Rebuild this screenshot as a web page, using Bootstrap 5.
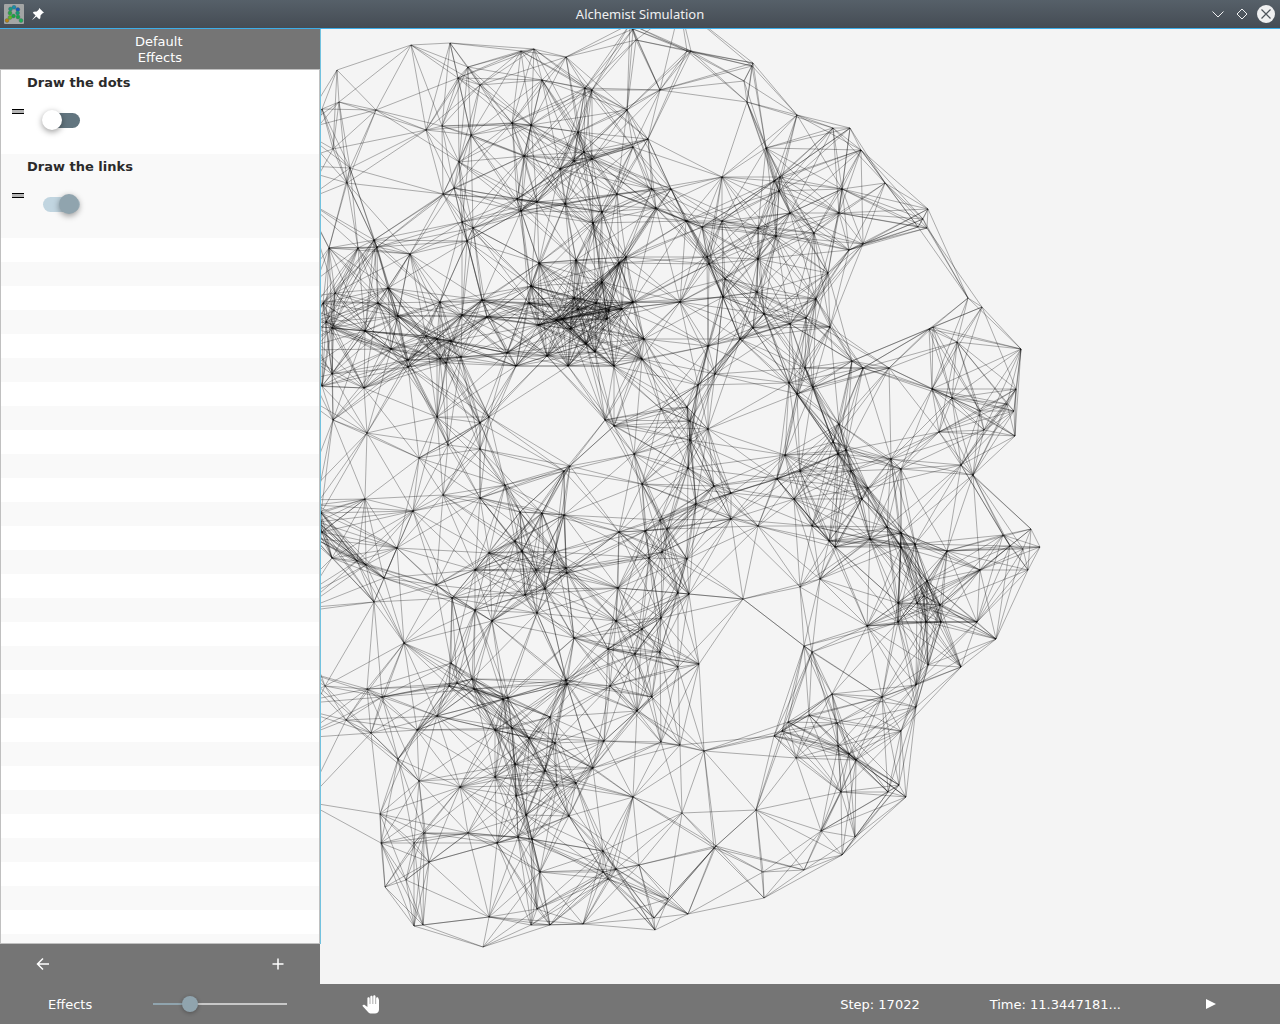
<!DOCTYPE html>
<html lang="en">
<head>
<meta charset="utf-8">
<meta name="viewport" content="width=device-width, initial-scale=1">
<title>Alchemist Simulation</title>
<link href="https://cdn.jsdelivr.net/npm/bootstrap@5.3.0/dist/css/bootstrap.min.css" rel="stylesheet">
<style>
  body { font: 13px/16px "DejaVu Sans", sans-serif; background: #f4f4f4; color: #212121; }
  .titlebar { height: 29px; background: linear-gradient(#566069, #454c54); border-bottom: 1px solid #3daee9; color: #eff0f1; font: 13px/18px "Noto Sans", sans-serif; }
  .titlebar .side { flex: 1 1 0; }
  .plain { border: 0; background: none; padding: 0; color: #fff; display: flex; align-items: center; justify-content: center; }
  .win { width: 20px; height: 20px; }
  .bar { background: #757575; color: #fff; height: 40px; }
  .bar label, .bar span, .drawer-title { padding-top: 2px; }
  .drawer { width: 320px; z-index: 1; }
  .drawer-top { box-shadow: 1px 0 0 #72c2df; }
  .drawer-title { width: 50px; padding-right: 3px; }
  .effects { border: 1px solid #c0c0c0; background: #fff; }
  .effect { height: 84px; padding: 5px 11px; gap: 3px; }
  .effect:nth-child(even) { background: #f9f9f9; }
  .effect label { font-weight: 700; color: #2b2b2b; }
  .stripes { background: repeating-linear-gradient(#fff 0 24px, #f9f9f9 24px 48px); }
  .toggle { appearance: none; display: block; width: 38px; height: 20px; margin: 19px 0 0 15px; position: relative; }
  .toggle::before { content: ""; position: absolute; inset: 3px 0 2px 1px; border-radius: 8px; background: #62757f; }
  .toggle::after { content: ""; position: absolute; left: 0; top: 0; width: 20px; height: 20px; border-radius: 50%; background: #fff; box-shadow: 0 2px 6px rgba(0,0,0,.4); }
  .toggle:checked::before { background: #c1d5e0; }
  .toggle:checked::after { left: 17px; background: #90a4ae; }
  .zoomer { appearance: none; width: 134px; height: 16px; margin: 0 0 0 61px; background: linear-gradient(90deg, #90a4ae 27%, #c8c8c8 27%) center / 100% 2px no-repeat; }
  .zoomer::-webkit-slider-thumb { appearance: none; width: 16px; height: 16px; border-radius: 50%; background: #90a4ae; box-shadow: 0 1px 4px rgba(0,0,0,.3); }
  .zoomer::-moz-range-thumb { width: 16px; height: 16px; border: 0; border-radius: 50%; background: #90a4ae; }
  .pan { margin-left: 75px; }
  .time { margin-left: 70px; }
  .play { margin: 0 16px 0 85px; }
  .links line { stroke: #000; stroke-opacity: .3; stroke-width: 1; }
</style>
<script src="https://cdn.jsdelivr.net/npm/bootstrap@5.3.0/dist/js/bootstrap.bundle.min.js"></script>
</head>
<body class="vh-100 d-flex flex-column overflow-hidden">
<header class="titlebar d-flex align-items-center flex-shrink-0 px-1">
  <div class="side d-flex align-items-center gap-2">
    <svg width="20" height="20" viewBox="0 0 20 20" aria-hidden="true">
      <rect width="20" height="20" rx="1" fill="#a3a5a5"/>
      <g stroke="#47665f" stroke-width=".4">
        <circle cx="10" cy="3.300" r="2" fill="#168cae"/><circle cx="6.500" cy="5" r="2" fill="#1a9c80"/><circle cx="13.800" cy="5.500" r="2" fill="#1758b8"/>
        <circle cx="6" cy="9" r="2" fill="#27a941"/><circle cx="13.600" cy="9" r="2" fill="#139c71"/><circle cx="9.500" cy="12" r="2" fill="#16a83f"/>
        <circle cx="6" cy="13.500" r="2" fill="#64b91c"/><circle cx="14" cy="13" r="2" fill="#16a446"/><circle cx="3" cy="16.500" r="2" fill="#b98212"/><circle cx="17" cy="16.500" r="2" fill="#1ead58"/>
      </g>
    </svg>
    <button class="plain" aria-label="Keep above"><svg width="12" height="12" viewBox="0 0 12 12" fill="#fff"><path d="M7.200 0 12 4.800 10.600 5.200 8.600 7.200 8.300 10.200 7.200 11.200 4.400 8.400 .6 11.700.3 11.400 3.600 7.600.8 4.800 1.800 3.700 4.800 3.400 6.800 1.400Z"/></svg></button>
  </div>
  <div>Alchemist Simulation</div>
  <div class="side d-flex justify-content-end gap-1">
    <button class="plain win" aria-label="Minimize"><svg width="12" height="12" fill="none" stroke="#eff0f1"><path d="M.5 3.500 6 9l5.500-5.500"/></svg></button>
    <button class="plain win" aria-label="Maximize"><svg width="12" height="12" fill="none" stroke="#eff0f1"><path d="M6 1 11 6 6 11 1 6Z"/></svg></button>
    <button class="plain win" aria-label="Close"><svg width="18" height="18" fill="none"><circle cx="9" cy="9" r="9" fill="#eff0f1"/><path d="m4.500 4.500 9 9m0-9-9 9" stroke="#4d545b" stroke-width="1.200"/></svg></button>
  </div>
</header>
<main class="d-flex flex-grow-1 overflow-hidden">
  <aside class="drawer d-flex flex-column flex-shrink-0 position-relative">
    <div class="drawer-top d-flex flex-column flex-grow-1">
      <div class="bar d-flex justify-content-center align-items-center"><div class="drawer-title text-end">Default Effects</div></div>
      <div class="effects d-flex flex-column flex-grow-1">
        <div class="effect d-flex">
          <svg class="my-auto flex-shrink-0" width="12" height="6" aria-hidden="true"><path d="M0 1h12v4H0z" fill="#b5b5b5"/><path d="M0 .5h12M0 4.500h12" stroke="#000"/></svg>
          <div>
            <label class="d-block" for="dots">Draw the dots</label>
            <input class="toggle" type="checkbox" role="switch" id="dots">
          </div>
        </div>
        <div class="effect d-flex">
          <svg class="my-auto flex-shrink-0" width="12" height="6" aria-hidden="true"><path d="M0 1h12v4H0z" fill="#b5b5b5"/><path d="M0 .5h12M0 4.500h12" stroke="#000"/></svg>
          <div>
            <label class="d-block" for="links">Draw the links</label>
            <input class="toggle" type="checkbox" role="switch" id="links" checked>
          </div>
        </div>
        <div class="stripes flex-grow-1"></div>
      </div>
    </div>
    <div class="bar d-flex justify-content-between align-items-center px-4">
      <button class="plain ms-2 p-1" aria-label="Back"><svg width="14" height="14" fill="none" stroke="#fff" stroke-width="1.500"><path d="M13 7H2M7 1.500 1.500 7 7 12.500"/></svg></button>
      <button class="plain me-2 p-1" aria-label="Add effect"><svg width="12" height="12" fill="none" stroke="#fff" stroke-width="1.500"><path d="M6 .5v11M.5 6h11"/></svg></button>
    </div>
  </aside>
  <section class="flex-grow-1 overflow-hidden">
    <svg class="links d-block w-100 h-100" id="graph" viewBox="320 29 960 955" role="img" aria-label="Simulation links"></svg>
  </section>
</main>
<footer class="bar d-flex align-items-center flex-shrink-0 px-5">
  <label for="zoom">Effects</label>
  <input class="zoomer" id="zoom" type="range" value="24">
  <button class="plain pan" aria-label="Pan"><svg width="18" height="19" viewBox="0 0 18 19" fill="#fff"><path d="M17 5v9.500c0 2.500-1.800 4-4 4H9.500c-1.500 0-2.500-.5-3.500-1.600L.3 10.700 1.200 9.900c.5-.3 1-.3 1.500 0l2.700 2V3.300c0-1.500 2.300-1.500 2.300 0V9h.6V1.800c0-1.500 2.300-1.500 2.300 0V9h.6V1.300c0-1.500 2.300-1.500 2.300 0V9h.6V3.300c0-1.500 2.300-1.500 2.300 0Z"/></svg></button>
  <span class="step ms-auto">Step: 17022</span>
  <span class="time">Time: 11.3447181...</span>
  <button class="plain play" aria-label="Play"><svg width="10" height="10" fill="#fff"><path d="M0 0 10 5 0 10Z"/></svg></button>
</footer>
<script>
  // Node positions in the environment; two nodes are linked when they are within range.
  const nodes = `337,70 411,45 450,43 521,51 534,49 566,57 468,67 458,78 480,85 542,80 339,102 322,109 376,110 426,130 442,126 471,135 512,123 531,125 578,132 524,156 459,162 454,188 443,194 333,149 350,168 347,183 574,161 560,169 517,199 537,202 565,204 521,211 462,222 473,228 467,241 374,240 377,247 358,248 329,248 410,254 539,263 576,260
  633,29 636,40 691,51 687,51 753,63 752,66 744,81 747,102 660,90 592,90 585,88 627,110 648,139 633,147 584,152 592,159 797,115 766,148 780,177 774,181 779,191 722,177 671,189 652,189 617,194 656,208 602,212 593,223 686,221 702,227 722,221 790,213 758,228 776,236 814,233 758,259 626,257 707,257 709,264
  388,288 378,303 335,293 323,303 326,322 332,328 365,331 398,316 440,302 482,300 462,315 487,317 531,286 529,303 538,325 556,320 570,329 574,298 426,336 437,339 451,341 391,349 408,360 408,367 440,359 446,363 461,357 507,353 516,366 547,356 568,366 332,374 322,386 364,388 333,420 367,433 437,417 489,417 480,423 448,445 419,458 480,449 564,471 570,466
  602,282 619,263 633,302 680,302 622,309 609,310 596,303 578,309 607,319 562,319 586,344 595,352 614,366 644,339 642,359 723,297 725,279 757,292 764,314 753,328 740,339 790,324 806,318 816,299 805,368 708,346 715,374 698,385 661,409 687,407 605,420 614,426 690,421 690,440 708,429 634,454 688,468 789,383 797,394 813,387 785,455 800,471
  833,128 850,128 861,150 885,183 842,189 839,213 928,209 923,219 927,228 918,227 863,244 849,250 828,273 830,327 968,298 982,307 929,329 933,327 957,342 1021,349 852,361 863,368 889,368 932,389 952,398 980,411 1016,389 1007,404 1014,411 984,430 1015,436 939,432 839,424 833,442 846,450
  505,485 480,498 443,495 365,499 413,511 321,513 322,532 332,558 357,561 366,565 384,578 397,548 436,585 374,602 452,598 404,643 475,610 492,621 475,570 489,553 515,541 520,512 542,513 564,515 522,551 555,552 566,568 567,573 536,570 545,589 525,595 537,613 574,638 618,588 616,621 608,649 635,654 642,629 661,618 660,652 678,667 699,664 652,697 637,711 610,686 566,680 567,684 619,532 645,531 660,520 667,529 662,552 649,558 687,559 678,593 689,594 642,484 696,504 451,663 472,679 449,686 474,689 457,683 508,698 503,699 550,717 367,689 382,697 325,686 437,716
  777,479 794,499 714,486 731,493 731,519 758,526 812,526 829,541 835,547 870,539 862,499 868,488 851,471 838,454 891,459 901,469 887,527 901,533 915,544 901,547 947,551 961,465 973,475 1031,529 1040,547 1028,570 1010,546 1003,535 1023,549 980,570 927,581 898,603 898,622 924,596 917,603 940,605 926,622 941,622 977,622 996,639 867,626 820,579 800,587 743,599 804,646 812,652 961,667 928,665 916,685 882,697 832,694 916,707
  346,720 371,733 417,730 398,759 419,781 460,787 495,777 495,730 512,728 529,738 515,764 555,743 545,771 557,785 576,783 593,768 604,741 380,814 381,843 424,833 414,843 468,833 429,862 406,880 385,887 414,926 423,925 489,917 483,947 497,843 518,837 532,839 526,815 516,796 569,816 540,872 537,909 531,925 550,925 583,924 603,851 603,872 616,869 608,879 633,797
  661,742 680,745 704,751 682,813 756,810 716,846 714,848 639,865 668,899 688,914 654,918 655,930 764,898 763,872 804,870 842,855 855,837 821,831 841,792 888,792 899,785 906,797 796,758 774,736 782,731 788,722 809,715 837,723 838,746 849,754 856,760 901,731
  680,6 630,24 300,130 285,165 305,200 290,300 300,325 298,350 285,385 302,500 316,505 318,522 314,538 290,520 280,610 298,612 300,670 285,705 300,738 306,802`.trim().split(/\s+/).map(p => p.split(",").map(Number));
  const range = 98, graph = document.getElementById("graph");
  // Pairs that are near each other but have no link.
  const unlinked = new Set(["1015,436 1031,529", "668,899 764,898", "680,6 744,81", "680,6 753,63"]);
  nodes.forEach(([x1, y1], i) => nodes.slice(i + 1).forEach(([x2, y2]) => {
    if (Math.hypot(x1 - x2, y1 - y2) > range) return;
    if (unlinked.has(`${x1},${y1} ${x2},${y2}`) || unlinked.has(`${x2},${y2} ${x1},${y1}`) && y2 > 6 + y1) return;
    const line = document.createElementNS("http://www.w3.org/2000/svg", "line");
    Object.entries({ x1, y1, x2, y2 }).forEach(([k, v]) => line.setAttribute(k, v));
    graph.append(line);
  }));
</script>
</body>
</html>
